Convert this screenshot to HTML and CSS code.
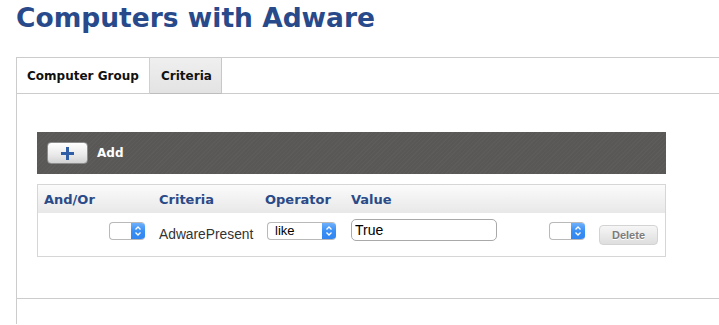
FILE: index.html
```html
<!DOCTYPE html>
<html lang="en">
<head>
  <meta charset="UTF-8" />
  <meta name="viewport" content="width=device-width, initial-scale=1.0" />
  <title>Computers with Adware</title>
  <link rel="stylesheet" href="styles.css">
</head>
<body>

  <h1>Computers with Adware</h1>

  <div class="panel">
    <div class="tabs">
      <div class="tab">Computer Group</div>
      <div class="tab active">Criteria</div>
    </div>

    <div class="content">
      <div class="toolbar">
        <button class="add-btn" aria-label="Add">
          <svg width="13" height="13" viewBox="0 0 13 13">
            <rect x="5" y="0" width="3" height="13" fill="#2f5ea6" />
            <rect x="0" y="5" width="13" height="3" fill="#2f5ea6" />
          </svg>
        </button>
        <span class="add-label">Add</span>
      </div>

      <div class="criteria">
        <div class="grid head">
          <div class="col-first">And/Or</div>
          <div>Criteria</div>
          <div>Operator</div>
          <div>Value</div>
          <div></div>
          <div></div>
        </div>
        <div class="grid row">
          <div>
            <span class="select andor">
              <span class="select-text"></span>
              <span class="select-arrows">
                <svg width="8" height="12" viewBox="0 0 8 12"><path d="M1.5 4.5 L4 2 L6.5 4.5 M1.5 7.5 L4 10 L6.5 7.5" fill="none" stroke="#fff" stroke-width="1.3" /></svg>
              </span>
            </span>
          </div>
          <div class="crit-name">AdwarePresent</div>
          <div>
            <span class="select operator">
              <span class="select-text">like</span>
              <span class="select-arrows">
                <svg width="8" height="12" viewBox="0 0 8 12"><path d="M1.5 4.5 L4 2 L6.5 4.5 M1.5 7.5 L4 10 L6.5 7.5" fill="none" stroke="#fff" stroke-width="1.3" /></svg>
              </span>
            </span>
          </div>
          <div>
            <input type="text" class="value-input" value="True" />
          </div>
          <div>
            <span class="select paren">
              <span class="select-text"></span>
              <span class="select-arrows">
                <svg width="8" height="12" viewBox="0 0 8 12"><path d="M1.5 4.5 L4 2 L6.5 4.5 M1.5 7.5 L4 10 L6.5 7.5" fill="none" stroke="#fff" stroke-width="1.3" /></svg>
              </span>
            </span>
          </div>
          <div>
            <button class="delete-btn">Delete</button>
          </div>
        </div>
      </div>
    </div>

    <div class="footer"></div>
  </div>

</body>
</html>
```

FILE: styles.css
```css
body {
  margin: 0;
  font-family: "DejaVu Sans", Verdana, sans-serif;
  background-color: #fff;
  color: #333;
  overflow: hidden;
}

h1 {
  margin: 0 0 21px 16px;
  font-size: 26.5px;
  line-height: 36px;
  font-weight: bold;
  color: #284a8b;
}

.panel {
  margin-left: 16px;
  border-left: 1px solid #cccccc;
  border-top: 1px solid #cccccc;
}

.tabs {
  display: flex;
  height: 35px;
  border-bottom: 1px solid #cccccc;
}

.tab {
  display: flex;
  align-items: center;
  white-space: nowrap;
  font-size: 12px;
  font-weight: bold;
  color: #111;
  padding: 0 11px 0 10px;
  width: 111px;
  border-right: 1px solid #d0d0d0;
}

.tab.active {
  width: 49px;
  padding: 0 11px 0 11px;
  background: linear-gradient(#efefef, #e3e3e3);
  border-right: 1px solid #c8c8c8;
  border-bottom: 1px solid #bdbdbd;
  margin-bottom: -1px;
}

.content {
  padding: 38px 0 41px 20px;
}

.toolbar {
  width: 629px;
  height: 42px;
  display: flex;
  align-items: center;
  padding-left: 10px;
  box-sizing: border-box;
  background-color: #5c5a59;
  background-image: repeating-linear-gradient(135deg, #5e5c5b 0, #5e5c5b 1px, #5a5857 1px, #5a5857 3px);
}

.add-btn {
  width: 41px;
  height: 22px;
  padding: 0;
  display: flex;
  align-items: center;
  justify-content: center;
  border: 1px solid #8d8d8d;
  border-radius: 4px;
  background: linear-gradient(#ffffff, #e9e9e9 60%, #d2d2d2);
}

.add-label {
  margin-left: 9px;
  font-size: 12px;
  font-weight: bold;
  color: #fff;
}

.criteria {
  width: 629px;
  margin-top: 10px;
  border: 1px solid #d6d6d6;
  box-sizing: border-box;
}

.grid {
  display: grid;
  grid-template-columns: 121px 106px 86px 198px 50px 1fr;
}

.head {
  height: 28px;
  align-items: center;
  font-size: 13px;
  font-weight: bold;
  color: #2a4a88;
  background: linear-gradient(#fbfbfb, #e8e8e8);
}

.col-first {
  padding-left: 6px;
}

.row {
  height: 43px;
  align-items: start;
}

.select {
  display: inline-flex;
  height: 18px;
  box-sizing: border-box;
  border: 1px solid #b9b9b9;
  border-right: none;
  border-radius: 4px;
  background: #fff;
  overflow: hidden;
  font-family: "Liberation Sans", Arial, sans-serif;
  font-size: 13px;
  color: #000;
}

.select-text {
  flex: 1;
  padding-left: 7px;
  line-height: 15px;
}

.select-arrows {
  width: 14px;
  margin-top: -1px;
  height: 18px;
  display: flex;
  align-items: center;
  justify-content: center;
  background: linear-gradient(#74b4fc, #3a8ff5 50%, #2f84f0);
}

.andor {
  width: 36px;
  margin: 9px 0 0 71px;
}

.operator {
  width: 69px;
  margin: 9px 0 0 2px;
}

.paren {
  width: 36px;
  margin-top: 9px;
}

.crit-name {
  margin-top: 14px;
  font-family: "Liberation Sans", Arial, sans-serif;
  font-size: 13.8px;
  line-height: 16px;
  color: #333;
}

.value-input {
  width: 146px;
  height: 22px;
  margin-top: 6px;
  box-sizing: border-box;
  border: 1px solid #a9a9a9;
  border-radius: 5px;
  padding: 0 3px;
  font-family: "Liberation Sans", Arial, sans-serif;
  font-size: 14px;
  color: #000;
}

.delete-btn {
  width: 59px;
  height: 20px;
  margin-top: 12px;
  padding: 0;
  border: 1px solid #d3d3d3;
  border-radius: 4px;
  background: linear-gradient(#f6f6f6, #dedede);
  font-family: "Liberation Sans", Arial, sans-serif;
  font-size: 11px;
  font-weight: bold;
  color: #7c7c7c;
  text-shadow: 0 1px 0 #fff;
}

.footer {
  border-top: 1px solid #cccccc;
  height: 25px;
}
```
